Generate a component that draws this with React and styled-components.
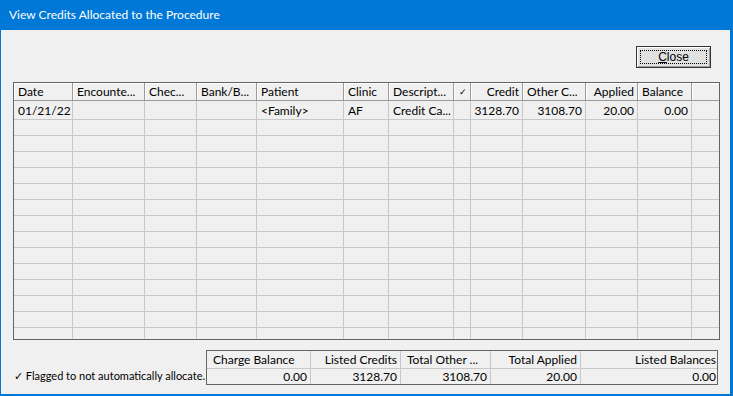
import React from 'react';
import styled, { createGlobalStyle } from 'styled-components';

const GlobalStyle = createGlobalStyle`
    html, body {
        margin: 0;
        padding: 0;
        background: #f0f0f0;
    }
    * {
        box-sizing: border-box;
    }
`

const Window = styled.div`
    width: 733px;
    height: 396px;
    display: flex;
    flex-direction: column;
    background: #f0f0f0;
    border-left: 1px solid #0078d7;
    border-right: 3px solid #0078d7;
    border-bottom: 2px solid #0078d7;
    font-family: Lato, "Noto Sans", sans-serif;
    font-size: 12px;
    color: #000;
    overflow: hidden;
`

const TitleBar = styled.div`
    height: 30px;
    flex: none;
    margin-left: -1px;
    margin-right: -3px;
    background: #0078d7;
    color: #fff;
    display: flex;
    align-items: center;
    padding: 0 0 1px 9px;
    font-size: 12px;
`

const Body = styled.div`
    flex: 1;
    display: flex;
    flex-direction: column;
    padding: 16px 10px 0 12px;
`

const ButtonRow = styled.div`
    display: flex;
    justify-content: flex-end;
    padding-right: 9px;
`

const Button = styled.button`
    width: 75px;
    height: 22px;
    padding: 0;
    background: #e1e1e1;
    border: 1px solid #333;
    box-shadow: inset 1px 1px 0 #fff, inset -1px -1px 0 #a0a0a0, inset 0 0 0 2px #e1e1e1;
    font-family: "Liberation Sans", Arial, sans-serif;
    font-size: 12px;
    color: #000;
    position: relative;
    &::after {
        content: '';
        position: absolute;
        inset: 3px;
        border: 1px dotted #000;
    }
    u {
        text-decoration: underline;
    }
`

const Grid = styled.div`
    margin-top: 14px;
    width: 707px;
    height: 258px;
    border: 1px solid #646464;
    overflow: hidden;
    background: #f0f0f0;
`

const cols = '59px 72px 52px 60px 87px 45px 65px 17px 52px 63px 52px 54px 27px';

const HeaderRow = styled.div`
    display: grid;
    grid-template-columns: ${cols};
    height: 18px;
    border-bottom: 1px solid #9a9a9a;
`

const HeaderCell = styled.div`
    display: flex;
    align-items: center;
    justify-content: ${p => p.align === 'right' ? 'flex-end' : p.align === 'center' ? 'center' : 'flex-start'};
    padding: 0 3px 0 4px;
    border-right: 1px solid #9a9a9a;
    box-shadow: inset 1px 1px 0 #fff;
    white-space: nowrap;
    overflow: hidden;
    font-size: ${p => p.small ? '9px' : '12px'};
    &:last-child {
        border-right: none;
    }
`

const Row = styled.div`
    display: grid;
    grid-template-columns: ${cols};
    height: ${p => p.first ? '19px' : '16px'};
    border-bottom: 1px solid #c8c8c8;
`

const Cell = styled.div`
    display: flex;
    align-items: center;
    justify-content: ${p => p.align === 'right' ? 'flex-end' : 'flex-start'};
    padding: 0 3px 0 4px;
    border-right: 1px solid #c8c8c8;
    white-space: nowrap;
    overflow: hidden;
    &:last-child {
        border-right: none;
    }
`

const Footer = styled.div`
    margin-top: 10px;
    display: flex;
    align-items: flex-end;
`

const Note = styled.div`
    flex: 1;
    min-width: 0;
    padding: 0 0 5px 1px;
    white-space: nowrap;
    font-size: 11px;
`

const Totals = styled.div`
    flex: none;
    width: 512px;
    margin-right: 2px;
    border: 1px solid #646464;
    margin-bottom: 3px;
`

const totalCols = '104px 90px 90px 90px 136px';

const TotalsRow = styled.div`
    display: grid;
    grid-template-columns: ${totalCols};
    height: ${p => p.head ? '18px' : '15px'};
    border-bottom: ${p => p.head ? '1px solid #c8c8c8' : 'none'};
`

const TotalsCell = styled.div`
    display: flex;
    align-items: center;
    justify-content: ${p => p.align === 'left' ? 'flex-start' : 'flex-end'};
    padding: 0 3px 0 6px;
    border-right: 1px solid #c8c8c8;
    white-space: nowrap;
    overflow: hidden;
    &:last-child {
        border-right: none;
        padding-right: 1px;
    }
`

const headers = [
    { t: 'Date' },
    { t: 'Encounte...' },
    { t: 'Chec...' },
    { t: 'Bank/B...' },
    { t: 'Patient' },
    { t: 'Clinic' },
    { t: 'Descript...' },
    { t: '✓', align: 'center', small: true },
    { t: 'Credit', align: 'right' },
    { t: 'Other C...' },
    { t: 'Applied', align: 'right' },
    { t: 'Balance' },
    { t: '' },
]

const aligns = ['left', 'left', 'left', 'left', 'left', 'left', 'left', 'left', 'right', 'right', 'right', 'right', 'left'];

const rows = [
    ['01/21/22', '', '', '', '<Family>', 'AF', 'Credit Ca...', '', '3128.70', '3108.70', '20.00', '0.00', ''],
]

const emptyRow = Array(13).fill('');
const allRows = [...rows, ...Array(14).fill(emptyRow)];

const totalsHead = [
    { t: 'Charge Balance', align: 'left' },
    { t: 'Listed Credits' },
    { t: 'Total Other ...', align: 'left' },
    { t: 'Total Applied' },
    { t: 'Listed Balances' },
]

const totalsVals = ['0.00', '3128.70', '3108.70', '20.00', '0.00'];

class App extends React.Component {
    render() {
        return (
            <Window>
                <GlobalStyle />
                <TitleBar>View Credits Allocated to the Procedure</TitleBar>
                <Body>
                    <ButtonRow>
                        <Button><u>C</u>lose</Button>
                    </ButtonRow>
                    <Grid>
                        <HeaderRow>
                            {headers.map((h, i) => (
                                <HeaderCell key={i} align={h.align} small={h.small}>{h.t}</HeaderCell>
                            ))}
                        </HeaderRow>
                        {allRows.map((r, i) => (
                            <Row key={i} first={i === 0}>
                                {r.map((c, j) => (
                                    <Cell key={j} align={aligns[j]}>{c}</Cell>
                                ))}
                            </Row>
                        ))}
                    </Grid>
                    <Footer>
                        <Note>✓ Flagged to not automatically allocate.</Note>
                        <Totals>
                            <TotalsRow head>
                                {totalsHead.map((h, i) => (
                                    <TotalsCell key={i} align={h.align}>{h.t}</TotalsCell>
                                ))}
                            </TotalsRow>
                            <TotalsRow>
                                {totalsVals.map((v, i) => (
                                    <TotalsCell key={i}>{v}</TotalsCell>
                                ))}
                            </TotalsRow>
                        </Totals>
                    </Footer>
                </Body>
            </Window>
        )
    }
}

export default App;
